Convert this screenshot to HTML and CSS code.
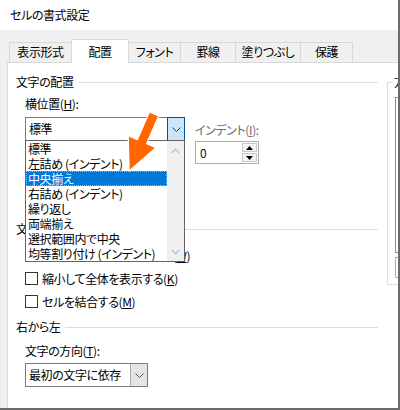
FILE: index.html
```html
<!DOCTYPE html>
<html lang="ja">
<head>
<meta charset="utf-8">
<title>セルの書式設定</title>
<link rel="stylesheet" href="styles.css">
</head>
<body>
<div class="window">
  <div class="titlebar">セルの書式設定</div>
  <div class="body">
    <div class="tabs">
      <div class="tab w1">表示形式</div>
      <div class="tab active w2">配置</div>
      <div class="tab w3">フォント</div>
      <div class="tab w4">罫線</div>
      <div class="tab w5">塗りつぶし</div>
      <div class="tab w6">保護</div>
    </div>
    <div class="panel">
      <div class="main">
        <div class="group-head"><span>文字の配置</span><i class="rule"></i></div>
        <div class="align-row">
          <div class="col-h">
            <div class="label">横位置(<u>H</u>):</div>
            <div class="combo combo-h">
              <span class="value">標準</span>
              <span class="drop-btn active-btn"><svg width="9" height="5" viewBox="0 0 9 5"><path d="M0.5 0.5 L4.5 4.5 L8.5 0.5" fill="none" stroke="#333" stroke-width="1"/></svg></span>
              <div class="listbox">
                <ul class="items">
                  <li>標準</li>
                  <li>左詰め (インデント)</li>
                  <li class="selected">中央揃え</li>
                  <li>右詰め (インデント)</li>
                  <li>繰り返し</li>
                  <li>両端揃え</li>
                  <li>選択範囲内で中央</li>
                  <li>均等割り付け (インデント)</li>
                </ul>
                <div class="vscroll">
                  <svg width="9" height="6" viewBox="0 0 9 6"><path d="M0.8 5 L4.5 1.3 L8.2 5" fill="none" stroke="#c4c4c4" stroke-width="1.6"/></svg>
                  <svg width="9" height="6" viewBox="0 0 9 6"><path d="M0.8 1 L4.5 4.7 L8.2 1" fill="none" stroke="#c4c4c4" stroke-width="1.6"/></svg>
                </div>
              </div>
            </div>
            <div class="label gap-label">縦位置(<u>V</u>):</div>
            <div class="combo combo-h">
              <span class="value">中央揃え</span>
              <span class="drop-btn"><svg width="9" height="5" viewBox="0 0 9 5"><path d="M0.5 0.5 L4.5 4.5 L8.5 0.5" fill="none" stroke="#333" stroke-width="1"/></svg></span>
            </div>
          </div>
          <div class="col-indent">
            <div class="label disabled">インデント(<u>I</u>):</div>
            <div class="spin">
              <span class="spin-value">0</span>
              <span class="spin-btns">
                <span class="spin-btn"><svg width="7" height="4" viewBox="0 0 7 4"><path d="M0 4 L3.5 0 L7 4 Z" fill="#000"/></svg></span>
                <span class="spin-btn"><svg width="7" height="4" viewBox="0 0 7 4"><path d="M0 0 L3.5 4 L7 0 Z" fill="#000"/></svg></span>
              </span>
            </div>
          </div>
        </div>
        <div class="group-head"><span>文字の制御</span><i class="rule"></i></div>
        <div class="checks">
          <label class="check"><span class="box"></span><span>折り返して全体を表示する(<u>W</u>)</span></label>
          <label class="check"><span class="box"></span><span>縮小して全体を表示する(<u>K</u>)</span></label>
          <label class="check"><span class="box"></span><span>セルを結合する(<u>M</u>)</span></label>
        </div>
        <div class="group-head head3"><span>右から左</span><i class="rule"></i></div>
        <div class="label dir-label">文字の方向(<u>T</u>):</div>
        <div class="combo combo-dir">
          <span class="value">最初の文字に依存</span>
          <span class="drop-btn plain-btn"><svg width="9" height="5" viewBox="0 0 9 5"><path d="M0.5 0.5 L4.5 4.5 L8.5 0.5" fill="none" stroke="#555" stroke-width="1"/></svg></span>
        </div>
      </div>
      <div class="side">
        <span class="side-title">方向</span>
        <div class="orient-box"></div>
        <div class="degree-box"></div>
      </div>
    </div>
  </div>
  <svg class="arrow" width="400" height="410" viewBox="0 0 400 410">
    <polygon points="149.4,112 158.6,116 146.6,143.6 155.8,147.6 129.2,171 128.2,135.6 137.4,139.6" fill="#ff6600" stroke="#ffffff" stroke-width="1.2" stroke-linejoin="miter"/>
  </svg>
</div>
</body>
</html>
```

FILE: styles.css
```css
* {
  box-sizing: border-box;
  margin: 0;
  padding: 0;
}

html, body {
  width: 400px;
  height: 410px;
  overflow: hidden;
}

body {
  font-family: "Noto Sans CJK JP", "Noto Sans", sans-serif;
  font-size: 12px;
  letter-spacing: -0.4px;
  color: #000;
  font-feature-settings: "palt";
  background: #fff;
}

u {
  text-decoration: underline;
  text-underline-offset: 1px;
}

.window {
  position: relative;
  width: 400px;
  height: 410px;
  border-right: 2px solid #6b6b6b;
  border-bottom: 2px solid #6b6b6b;
  overflow: hidden;
  background: #f0f0f0;
  display: flex;
  flex-direction: column;
}

.titlebar {
  flex: none;
  height: 30px;
  line-height: 30px;
  padding-left: 10px;
  background: #fff;
}

.body {
  flex: 1;
  min-height: 0;
  padding-left: 7px;
  display: flex;
  flex-direction: column;
}

/* tabs */
.tabs {
  flex: none;
  height: 32px;
  display: flex;
  align-items: flex-end;
  padding-left: 2px;
  position: relative;
  z-index: 2;
}

.tab {
  height: 20px;
  line-height: 18px;
  text-align: center;
  border: 1px solid #d9d9d9;
  border-bottom: none;
  background: #f0f0f0;
  white-space: nowrap;
}

.tab + .tab {
  margin-left: -1px;
}

.tab.active {
  height: 24px;
  margin-bottom: -1px;
  padding-top: 3px;
  background: #fff;
  position: relative;
  z-index: 1;
}

.w1 { width: 63px; }
.w2 { width: 58px; }
.w3 { width: 53px; }
.w4 { width: 56px; }
.w5 { width: 66px; }
.w6 { width: 53px; }

/* panel */
.panel {
  flex: 1;
  min-height: 0;
  background: #fff;
  border-left: 1px solid #d9d9d9;
  border-top: 1px solid #d9d9d9;
  padding-left: 8px;
  display: flex;
  align-items: flex-start;
  position: relative;
}

.main {
  flex: none;
  width: 362px;
  margin-top: 12px;
}

.group-head {
  display: flex;
  align-items: center;
  gap: 5px;
  height: 14px;
  line-height: 14px;
  white-space: nowrap;
}

.rule {
  flex: 1;
  height: 1px;
  background: #dcdcdc;
}

.label {
  height: 14px;
  line-height: 14px;
  white-space: nowrap;
}

.disabled {
  color: #6d6d6d;
}

.align-row {
  margin-top: 8px;
  height: 125px;
  display: flex;
  padding-left: 9px;
}

.col-h {
  width: 160px;
  flex: none;
}

.gap-label {
  margin-top: 10px;
}

.combo {
  margin-top: 6px;
  height: 24px;
  border: 1px solid #7a7a7a;
  background: #fff;
  display: flex;
  position: relative;
}

.combo-dir {
  width: 123px;
  margin-top: 5px;
}

.combo .value {
  flex: 1;
  line-height: 22px;
  padding-left: 3px;
  white-space: nowrap;
  overflow: hidden;
}

.drop-btn {
  flex: none;
  width: 17px;
  display: flex;
  align-items: center;
  justify-content: center;
  background: #fff;
}

.drop-btn.active-btn {
  width: 18px;
  margin: -1px -1px -1px 0;
  border: 1px solid #005499;
  background: #cce4f7;
}

.drop-btn.plain-btn {
  border-left: 1px solid #adadad;
  background: #e5e5e5;
}

/* dropdown list */
.listbox {
  position: absolute;
  left: -1px;
  top: 22px;
  width: 160px;
  height: 122px;
  border: 1px solid #646464;
  background: #fff;
  display: flex;
  z-index: 5;
}

.items {
  list-style: none;
  flex: 1;
}

.items li {
  height: 15px;
  line-height: 15px;
  padding-left: 2px;
  white-space: nowrap;
  overflow: hidden;
}

.items li.selected {
  background: #0078d7;
  color: #fff;
  outline: 1px dotted #f3a45a;
  outline-offset: -1px;
}

.vscroll {
  flex: none;
  width: 17px;
  background: #f0f0f0;
  display: flex;
  flex-direction: column;
  justify-content: space-between;
  align-items: center;
  padding: 7px 0 6px;
}

/* indent */
.col-indent {
  margin-left: 10px;
  padding-top: 26px;
}

.spin {
  margin-top: 4px;
  width: 64px;
  height: 23px;
  border: 1px solid #adadad;
  display: flex;
  background: #fff;
}

.spin-value {
  flex: 1;
  line-height: 21px;
  padding-left: 4px;
  color: #111;
}

.spin-btns {
  width: 16px;
  display: flex;
  flex-direction: column;
  padding: 1px 1px 1px 0;
  gap: 1px;
}

.spin-btn {
  flex: 1;
  border: 1px solid #c8c8c8;
  background: #f4f4f4;
  display: flex;
  align-items: center;
  justify-content: center;
}

/* checks */
.checks {
  margin-top: 8px;
}

.check {
  height: 23px;
  display: flex;
  align-items: center;
  gap: 4px;
  padding-left: 9px;
  white-space: nowrap;
}

.box {
  flex: none;
  width: 13px;
  height: 13px;
  border: 1px solid #333;
  background: #fff;
}

.head3 {
  margin-top: 7px;
}

.dir-label {
  margin-top: 10px;
  padding-left: 9px;
}

.combo-dir {
  margin-left: 9px;
}

/* right group */
.side {
  flex: none;
  width: 120px;
  height: 203px;
  margin-top: 19px;
  margin-left: 9px;
  border: 1px solid #dcdcdc;
  position: relative;
  padding-left: 7px;
}

.side-title {
  position: absolute;
  left: 5px;
  top: -8px;
  line-height: 14px;
  background: #fff;
  padding: 0 1px;
}

.orient-box {
  margin-top: 14px;
  height: 156px;
  border: 1px solid #8c8c8c;
}

.degree-box {
  margin-top: 4px;
  height: 21px;
  border: 1px solid #adadad;
}

.arrow {
  position: absolute;
  left: 0;
  top: 0;
  pointer-events: none;
  z-index: 10;
}
```
